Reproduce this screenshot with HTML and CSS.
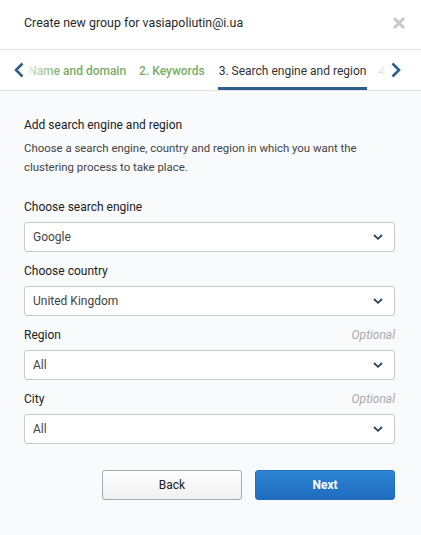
FILE: index.html
```html
<!DOCTYPE html>
<html>
<head>
<meta charset="utf-8">
<link rel="stylesheet" href="styles.css">
</head>
<body>
<div class="modal">
  <div class="header">
    <div class="title">Create new group for vasiapoliutin@i.ua</div>
    <svg class="close" width="14" height="14" viewBox="0 0 14 14"><path d="M2 2 L12 12 M12 2 L2 12" stroke="#c9c9c9" stroke-width="3" stroke-linecap="butt"/></svg>
  </div>
  <div class="tabs">
    <div class="strip">
      <div class="tab done">1. Name and domain</div>
      <div class="tab done">2. Keywords</div>
      <div class="tab active">3. Search engine and region</div>
      <div class="tab next">4. Clustering settings</div>
    </div>
    <div class="fade left">
      <svg width="10" height="16" viewBox="0 0 10 16"><path d="M8.5 1.5 L2 8 L8.5 14.5" fill="none" stroke="#2d5d8a" stroke-width="2.6"/></svg>
    </div>
    <div class="fade right">
      <svg width="10" height="16" viewBox="0 0 10 16"><path d="M1.5 1.5 L8 8 L1.5 14.5" fill="none" stroke="#2d5d8a" stroke-width="2.6"/></svg>
    </div>
  </div>
  <div class="body">
    <div class="heading">Add search engine and region</div>
    <div class="desc">Choose a search engine, country and region in which you want the clustering process to take place.</div>

    <div class="field">
      <div class="label"><span>Choose search engine</span></div>
      <div class="select"><span>Google</span><svg width="10" height="6" viewBox="0 0 10 6"><path d="M1 1 L5 4.8 L9 1" fill="none" stroke="#2b4661" stroke-width="1.8"/></svg></div>
    </div>
    <div class="field">
      <div class="label"><span>Choose country</span></div>
      <div class="select"><span>United Kingdom</span><svg width="10" height="6" viewBox="0 0 10 6"><path d="M1 1 L5 4.8 L9 1" fill="none" stroke="#2b4661" stroke-width="1.8"/></svg></div>
    </div>
    <div class="field">
      <div class="label"><span>Region</span><span class="opt">Optional</span></div>
      <div class="select"><span>All</span><svg width="10" height="6" viewBox="0 0 10 6"><path d="M1 1 L5 4.8 L9 1" fill="none" stroke="#2b4661" stroke-width="1.8"/></svg></div>
    </div>
    <div class="field">
      <div class="label"><span>City</span><span class="opt">Optional</span></div>
      <div class="select"><span>All</span><svg width="10" height="6" viewBox="0 0 10 6"><path d="M1 1 L5 4.8 L9 1" fill="none" stroke="#2b4661" stroke-width="1.8"/></svg></div>
    </div>

    <div class="buttons">
      <button class="btn back">Back</button>
      <button class="btn primary">Next</button>
    </div>
  </div>
</div>
</body>
</html>
```
FILE: styles.css
```css
* { box-sizing: border-box; }
html, body { margin: 0; padding: 0; }
body {
  font-family: Roboto, "Liberation Sans", sans-serif;
  background: #f8fafc;
  width: 421px;
  height: 535px;
  overflow: hidden;
}
.modal { width: 421px; }
.header {
  height: 50px;
  background: #fff;
  border-bottom: 1px solid #e3e3e3;
  display: flex;
  justify-content: space-between;
  align-items: flex-start;
  padding: 14px 15px 0 24px;
}
.title {
  font-size: 12.4px;
  line-height: 18px;
  color: #2a2a2a;
}
.close { margin-top: 2px; }
.tabs {
  position: relative;
  height: 41px;
  background: #fff;
  border-bottom: 1px solid #e3e3e3;
  overflow: hidden;
}
.strip {
  display: flex;
  gap: 13px;
  padding-left: 15px;
  white-space: nowrap;
}
.tab {
  font-size: 12px;
  line-height: 16px;
  padding-top: 13px;
  height: 40px;
  border-bottom: 3px solid transparent;
}
.tab.done { color: #78ad68; font-weight: 500; }
.tab.active { color: #333; border-bottom-color: #2e5f8c; padding: 13px 1px 0; }
.tab.next { color: #bbb; margin-left: -2px; }
.fade {
  position: absolute;
  top: 0;
  height: 40px;
  display: flex;
  align-items: center;
}
.fade.left {
  left: 0;
  width: 64px;
  padding-left: 14px;
  background: linear-gradient(to right, #fff 0, #fff 27px, rgba(255,255,255,0.55) 34px, rgba(255,255,255,0) 64px);
}
.fade.right {
  right: 0;
  width: 46px;
  padding-left: 16px;
  background: linear-gradient(to right, rgba(255,255,255,0) 0, rgba(255,255,255,0.6) 6px, #fff 14px);
}
.body {
  padding: 25px 26px 0 24px;
}
.heading {
  font-size: 12px;
  line-height: 19px;
  color: #222;
}
.desc {
  margin-top: 4px;
  font-size: 11.4px;
  line-height: 19px;
  color: #444;
  margin-bottom: 22px;
}
.field { margin-bottom: 11px; }
.label {
  display: flex;
  justify-content: space-between;
  font-size: 12px;
  line-height: 16px;
  color: #222;
  margin-bottom: 7px;
}
.opt { color: #aaa; font-style: italic; }
.select {
  height: 30px;
  background: #fff;
  border: 1px solid #c8c8c8;
  border-radius: 3px;
  display: flex;
  align-items: center;
  justify-content: space-between;
  padding: 0 11px 0 8px;
  font-size: 12px;
  color: #444;
}
.buttons {
  display: flex;
  justify-content: flex-end;
  gap: 13px;
  margin-top: 26px;
}
.btn {
  width: 140px;
  height: 30px;
  border-radius: 3px;
  font-family: Roboto, "Liberation Sans", sans-serif;
  font-size: 12px;
  cursor: pointer;
}
.btn.back {
  background: linear-gradient(#ffffff, #f0f0f0);
  border: 1px solid #a9a9a9;
  color: #222;
}
.btn.primary {
  background: linear-gradient(#2f84d4, #1f6cbd);
  border: 1px solid #2270c0;
  color: #fff;
  font-weight: 700;
}
```
